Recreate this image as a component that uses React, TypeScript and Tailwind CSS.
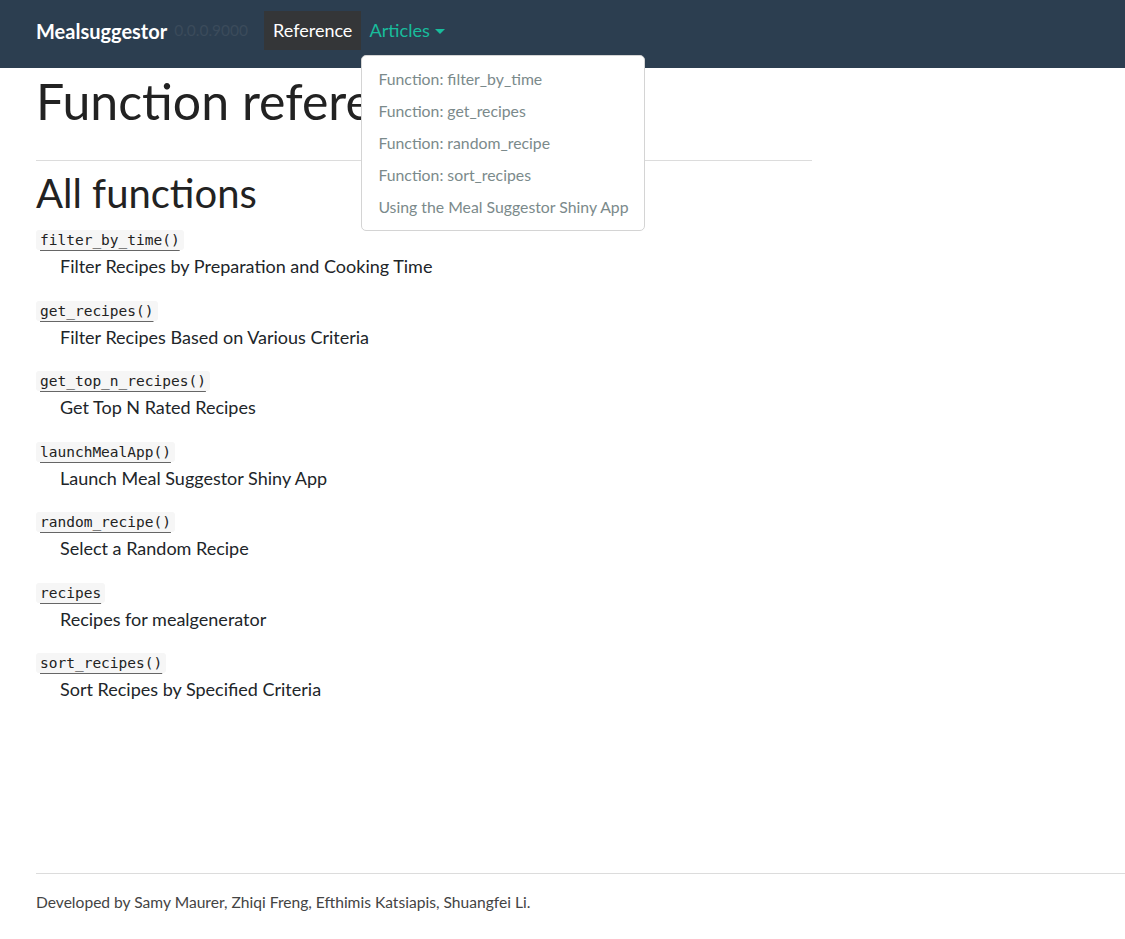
import React from 'react';

const functions = [
    { name: 'filter_by_time()', desc: 'Filter Recipes by Preparation and Cooking Time' },
    { name: 'get_recipes()', desc: 'Filter Recipes Based on Various Criteria' },
    { name: 'get_top_n_recipes()', desc: 'Get Top N Rated Recipes' },
    { name: 'launchMealApp()', desc: 'Launch Meal Suggestor Shiny App' },
    { name: 'random_recipe()', desc: 'Select a Random Recipe' },
    { name: 'recipes', desc: 'Recipes for mealgenerator' },
    { name: 'sort_recipes()', desc: 'Sort Recipes by Specified Criteria' },
];

const articles = [
    'Function: filter_by_time',
    'Function: get_recipes',
    'Function: random_recipe',
    'Function: sort_recipes',
    'Using the Meal Suggestor Shiny App',
];

export default function App() {
    return (
        <div className="min-h-[939px] bg-white text-[#212529] font-['Lato',sans-serif]">
            {/* Navbar */}
            <nav className="h-[68px] bg-[#2c3e50] pl-[36px] pt-[11px]">
                <div className="flex items-center h-[39px]">
                    <span className="text-white text-[20px] font-bold">Mealsuggestor</span>
                    <span className="ml-[7px] text-[15.5px] text-[#3b4b5b]">0.0.0.9000</span>
                    <a className="ml-[16px] h-[39px] px-[9px] flex items-center bg-[#343638] text-white text-[18px]">
                        Reference
                    </a>
                    <div className="relative h-[39px]">
                        <a className="h-[39px] px-[8px] flex items-center text-[#18bc9c] text-[18.2px]">
                            Articles
                            <span className="ml-[5px] mt-[1px] w-0 h-0 border-l-[5px] border-r-[5px] border-t-[5px] border-l-transparent border-r-transparent border-t-[#18bc9c]" />
                        </a>
                        <div className="absolute left-0 top-[44px] z-10 w-[284px] bg-white border border-[#d4d4d4] rounded-[5px] py-[7px]">
                            {articles.map((a) => (
                                <div key={a} className="h-[32px] px-[16px] flex items-center text-[15.8px] text-[#7b8a8b] whitespace-nowrap">
                                    {a}
                                </div>
                            ))}
                        </div>
                    </div>
                </div>
            </nav>

            {/* Content */}
            <main className="pl-[36px]">
                <div className="w-[776px]">
                    <h1 className="mt-[3px] text-[50px] leading-[1.2] text-[#222]">Function reference</h1>
                    <hr className="mt-[29px] border-0 border-t border-[#dcdcdc]" />
                    <h2 className="mt-[8px] text-[40px] leading-[1.2] text-[#222]">All functions</h2>
                    <dl className="mt-[13px]">
                        {functions.map((f) => (
                            <div key={f.name} className="mb-[20.5px]">
                                <dt className="h-[20px] flex items-center">
                                    <code className="px-[4px] leading-[20px] bg-[#f6f6f6] rounded-[3px] text-[14.5px] text-[#222] underline underline-offset-[5px] decoration-[#666] decoration-1 font-['DejaVu_Sans_Mono',monospace]">
                                        {f.name}
                                    </code>
                                </dt>
                                <dd className="ml-[24px] mt-[3px] text-[18px] leading-[27px]">{f.desc}</dd>
                            </div>
                        ))}
                    </dl>
                </div>
            </main>

            {/* Footer */}
            <footer className="ml-[36px] mt-[170px] border-t border-[#dcdcdc] pt-[17px]">
                <p className="text-[15.6px] text-[#444]">
                    Developed by Samy Maurer, Zhiqi Freng, Efthimis Katsiapis, Shuangfei Li.
                </p>
            </footer>
        </div>
    );
}
